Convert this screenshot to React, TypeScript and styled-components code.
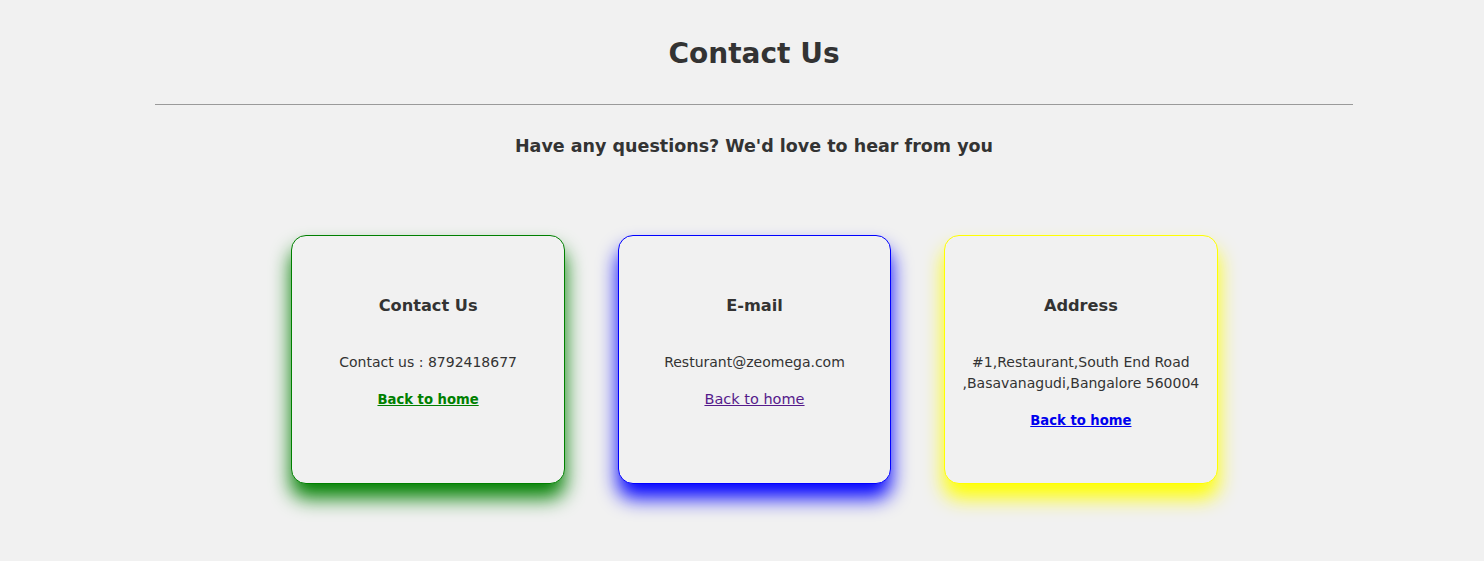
import React from "react";
import styled, { createGlobalStyle } from "styled-components";

const Global = createGlobalStyle`
  html, body { margin: 0; padding: 0; background: #f1f1f1; }
  body { font-family: "Comic Sans MS", "DejaVu Sans", sans-serif; color: #333; }
`;

const Page = styled.div`
  display: flex;
  flex-direction: column;
  align-items: center;
  padding-left: 24px;
  padding-top: 31px;
  min-height: 561px;
  box-sizing: border-box;
`;

const Title = styled.h1`
  margin: 0;
  font-size: 28px;
  line-height: 46px;
  font-weight: 700;
  color: #333;
`;

const Rule = styled.hr`
  width: 1198px;
  margin: 27px 0 0;
  border: none;
  border-top: 1px solid #9a9a9a;
`;

const Subtitle = styled.h2`
  margin: 27px 0 0;
  font-size: 17.5px;
  line-height: 28px;
  font-weight: 700;
  color: #333;
`;

const Cards = styled.div`
  display: flex;
  gap: 53px;
  margin-top: 75px;
  margin-left: 1px;
`;

const Card = styled.div<{ $c: string }>`
  box-sizing: border-box;
  width: 273.4px;
  height: 249px;
  border: 1px solid ${(p) => p.$c};
  border-radius: 15px;
  background: #f1f1f1;
  box-shadow: 0 14px 20px ${(p) => p.$c};
  display: flex;
  flex-direction: column;
  align-items: center;
  text-align: center;
  padding: 57px 10px 0;
`;

const CardTitle = styled.h3`
  margin: 0;
  font-size: 16.2px;
  line-height: 26px;
  font-weight: 700;
  color: #333;
`;

const CardText = styled.p`
  margin: 33px 0 0;
  font-size: 14px;
  line-height: 21px;
  color: #333;
`;

const HomeLink = styled.a<{ $c: string; $bold?: boolean }>`
  margin-top: 16px;
  font-size: ${(p) => (p.$bold ? "13.2px" : "14.5px")};
  line-height: 21px;
  color: ${(p) => p.$c};
  font-weight: ${(p) => (p.$bold ? 700 : 400)};
  text-decoration: underline;
`;

const data = [
  { title: "Contact Us", text: ["Contact us : 8792418677"], border: "green", link: "green", bold: true },
  { title: "E-mail", text: ["Resturant@zeomega.com"], border: "blue", link: "#551a8b", bold: false },
  {
    title: "Address",
    text: ["#1,Restaurant,South End Road", ",Basavanagudi,Bangalore 560004"],
    border: "yellow",
    link: "#0000ee",
    bold: true,
  },
];

export default function App() {
  return (
    <>
      <Global />
      <Page>
        <Title>Contact Us</Title>
        <Rule />
        <Subtitle>Have any questions? We'd love to hear from you</Subtitle>
        <Cards>
          {data.map((d) => (
            <Card key={d.title} $c={d.border}>
              <CardTitle>{d.title}</CardTitle>
              <CardText>
                {d.text.map((t, i) => (
                  <React.Fragment key={i}>
                    {i > 0 && <br />}
                    {t}
                  </React.Fragment>
                ))}
              </CardText>
              <HomeLink href="#" $c={d.link} $bold={d.bold}>
                Back to home
              </HomeLink>
            </Card>
          ))}
        </Cards>
      </Page>
    </>
  );
}
